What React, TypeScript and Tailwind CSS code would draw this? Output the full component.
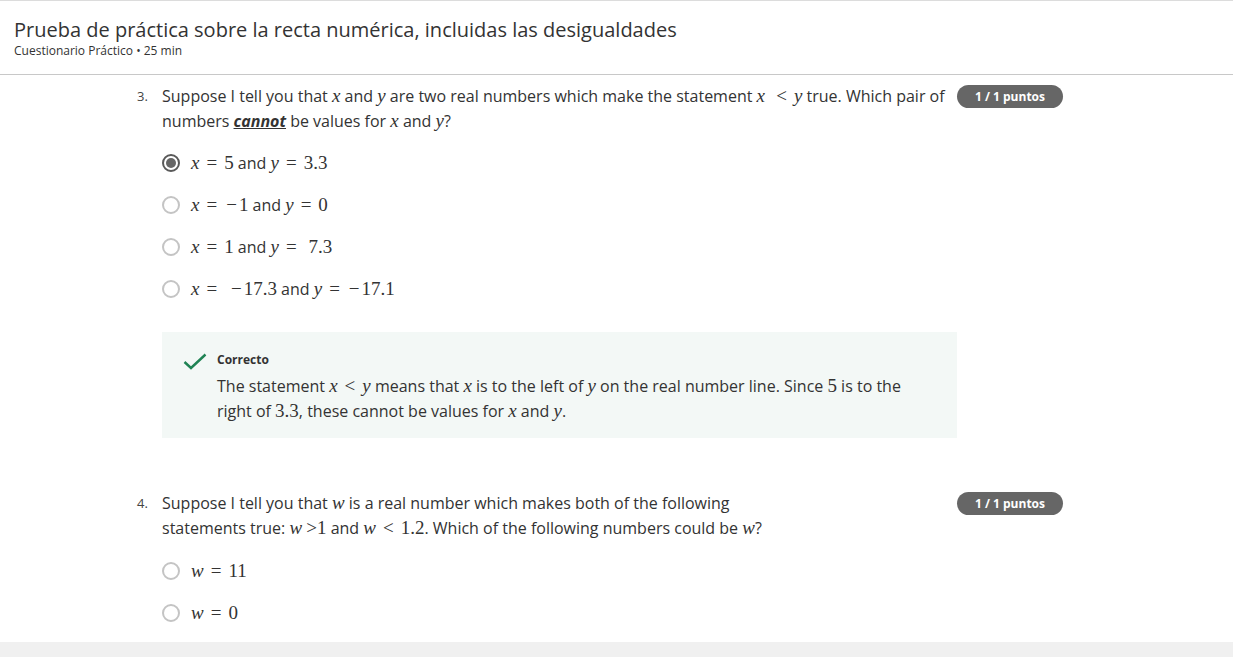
import React from 'react'

const M: React.FC<{ children: React.ReactNode }> = ({ children }) => (
  <span className="font-['Liberation_Serif',serif] text-[19px] leading-none">{children}</span>
)
const V: React.FC<{ children: React.ReactNode }> = ({ children }) => (
  <span className="font-['Liberation_Serif',serif] italic text-[19px] leading-none">{children}</span>
)
// relation sign with KaTeX-like thick spacing
const R: React.FC<{ children: React.ReactNode }> = ({ children }) => (
  <span className="font-['Liberation_Serif',serif] text-[19px] leading-none mx-[7px]">{children}</span>
)
// wide unary minus
const Mi = () => (
  <span className="font-['Liberation_Serif',serif] text-[19px] leading-none px-[2px]">−</span>
)

const Radio: React.FC<{ checked?: boolean }> = ({ checked }) =>
  checked ? (
    <span className="w-[18px] h-[18px] rounded-full border-2 border-[#5a5a5a] flex items-center justify-center">
      <span className="w-[10px] h-[10px] rounded-full bg-[#666]" />
    </span>
  ) : (
    <span className="w-[18px] h-[18px] rounded-full border-2 border-[#c4c4c4]" />
  )

const Option: React.FC<{ checked?: boolean; children: React.ReactNode }> = ({ checked, children }) => (
  <div className="flex items-center h-[42px]">
    <Radio checked={checked} />
    <span className="ml-[11px]">{children}</span>
  </div>
)

const Badge = () => (
  <div className="w-[106px] h-[23px] rounded-full bg-[#666] text-white text-[12px] font-bold flex items-center justify-center shrink-0 mt-[1px]">
    1 / 1 puntos
  </div>
)

export default function App() {
  return (
    <div className="min-h-[657px] bg-white font-['Open_Sans',sans-serif] text-[#333] flex flex-col">
      {/* header */}
      <div className="border-t border-[#dcdcdc] border-b border-b-[#c8c8c8] pl-[14px] pt-[16px] h-[75px]">
        <h1 className="text-[20px] leading-[26px] text-[#333]">
          Prueba de práctica sobre la recta numérica, incluidas las desigualdades
        </h1>
        <div className="text-[12px] leading-[14px] text-[#333] mt-[1px]">Cuestionario Práctico • 25 min</div>
      </div>

      <div className="flex-1 pl-[137px]">
        {/* question 3 */}
        <div className="mt-[9px] flex">
          <div className="w-[25px] text-[13px] leading-[25px] text-[#444]">3.</div>
          <div className="w-[795px] text-[16px] leading-[25px]">
            Suppose I tell you that <V>x</V> and <V>y</V> are two real numbers which make the statement{' '}
            <V>x</V>&nbsp;<R>&lt;</R><V>y</V> true. Which pair of numbers{' '}
            <b className="underline italic">cannot</b> be values for <V>x</V> and <V>y</V>?
          </div>
          <Badge />
        </div>
        <div className="pl-[25px] mt-[8px] text-[16px]">
          <Option checked>
            <V>x</V>
            <R>=</R>
            <M>5</M> and <V>y</V>
            <R>=</R>
            <M>3.3</M>
          </Option>
          <Option>
            <V>x</V>
            <R>=</R>
            <Mi />
            <M>1</M> and <V>y</V>
            <R>=</R>
            <M>0</M>
          </Option>
          <Option>
            <V>x</V>
            <R>=</R>
            <M>1</M> and <V>y</V>
            <R>=</R>
            <M>&nbsp;7.3</M>
          </Option>
          <Option>
            <V>x</V>
            <R>=</R>
            <M>&nbsp;</M>
            <Mi />
            <M>17.3</M> and <V>y</V>
            <R>=</R>
            <Mi />
            <M>17.1</M>
          </Option>

          <div className="mt-[22px] w-[795px] bg-[#f3f8f6] pl-[21px] pr-[21px] pt-[20px] pb-[14px] flex">
            <svg width="24" height="17" viewBox="0 0 24 17" className="mt-[1px] shrink-0">
              <path d="M1.5 9 L8 15 L22.5 1.5" fill="none" stroke="#1f8354" strokeWidth="2.4" />
            </svg>
            <div className="ml-[10px] w-[700px]">
              <div className="text-[12px] leading-[16px] font-bold text-[#333]">Correcto</div>
              <div className="text-[16px] leading-[25px] mt-[6px]">
                The statement <V>x</V>
                <R>&lt;</R>
                <V>y</V> means that <V>x</V> is to the left of <V>y</V> on the real number line. Since{' '}
                <M>5</M> is to the right of <M>3.3</M>, these cannot be values for <V>x</V> and <V>y</V>.
              </div>
            </div>
          </div>
        </div>

        {/* question 4 */}
        <div className="mt-[53px] flex">
          <div className="w-[25px] text-[13px] leading-[25px] text-[#444]">4.</div>
          <div className="w-[795px] text-[16px] leading-[25px]">
            Suppose I tell you that <V>w</V> is a real number which makes both of the following
            <br />
            statements true: <V>w</V> <M>&gt;</M>
            <M>1</M> and <V>w</V>
            <R>&lt;</R>
            <M>1.2</M>. Which of the following numbers could be <V>w</V>?
          </div>
          <Badge />
        </div>
        <div className="pl-[25px] mt-[9px] text-[16px]">
          <Option>
            <V>w</V>
            <R>=</R>
            <M>11</M>
          </Option>
          <Option>
            <V>w</V>
            <R>=</R>
            <M>0</M>
          </Option>
        </div>
      </div>
      <div className="h-[15px] bg-[#f0f0f0]" />
    </div>
  )
}
